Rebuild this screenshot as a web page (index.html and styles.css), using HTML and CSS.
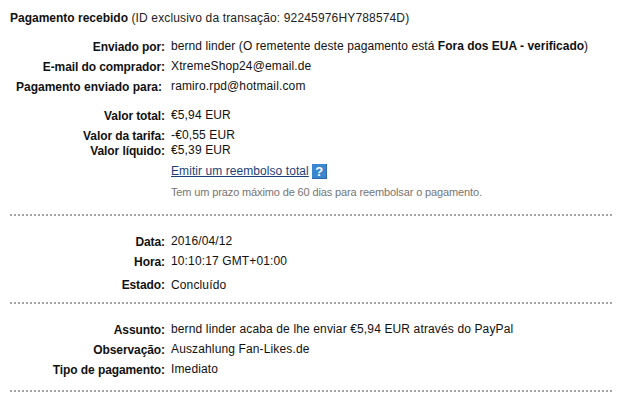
FILE: index.html
```html
<!DOCTYPE html>
<html lang="pt">
<head>
<meta charset="utf-8">
<title>Pagamento recebido</title>
<link rel="stylesheet" href="styles.css">
</head>
<body>
<main class="details">
  <h1 class="title"><span class="title-name">Pagamento recebido</span> <span class="title-id">(ID exclusivo da transação: 92245976HY788574D)</span></h1>
  <dl class="group parties">
    <div class="row"><dt>Enviado por:</dt><dd class="sender">bernd linder (O remetente deste pagamento está <b>Fora dos EUA - verificado</b>)</dd></div>
    <div class="row"><dt>E-mail do comprador:</dt><dd>XtremeShop24@email.de</dd></div>
    <div class="row recipient"><dt>Pagamento enviado para:</dt><dd>ramiro.rpd@hotmail.com</dd></div>
  </dl>
  <dl class="group amounts">
    <div class="row"><dt>Valor total:</dt><dd>€5,94 EUR</dd></div>
    <div class="row"><dt>Valor da tarifa:</dt><dd>-€0,55 EUR</dd></div>
    <div class="row net"><dt>Valor líquido:</dt><dd>€5,39 EUR</dd></div>
  </dl>
  <div class="refund">
    <div class="refund-action"><a class="refund-link" href="#">Emitir um reembolso total</a><span class="help">?</span></div>
    <p class="note">Tem um prazo máximo de 60 dias para reembolsar o pagamento.</p>
  </div>
  <hr class="rule">
  <dl class="group timing">
    <div class="row"><dt>Data:</dt><dd>2016/04/12</dd></div>
    <div class="row"><dt>Hora:</dt><dd>10:10:17 GMT+01:00</dd></div>
    <div class="row status"><dt>Estado:</dt><dd>Concluído</dd></div>
  </dl>
  <hr class="rule">
  <dl class="group subject">
    <div class="row"><dt>Assunto:</dt><dd>bernd linder acaba de lhe enviar €5,94 EUR através do PayPal</dd></div>
    <div class="row"><dt>Observação:</dt><dd>Auszahlung Fan-Likes.de</dd></div>
    <div class="row"><dt>Tipo de pagamento:</dt><dd>Imediato</dd></div>
  </dl>
  <hr class="rule">
</main>
</body>
</html>
```
FILE: styles.css
```css
body {
  margin: 0;
  background: #fff;
  color: #111;
  font: 12px/20px "Liberation Sans", Arial, sans-serif;
}
.details { padding: 8px 16px 0 10px; }
.title { margin: 0 0 8px; font: inherit; }
.title-name { font-weight: bold; }
.title-id { color: #222; letter-spacing: 0.155px; }
.group { margin: 0; }
.row { display: grid; grid-template-columns: 155px 1fr; column-gap: 6px; height: 20px; white-space: nowrap; }
dt { padding-top: 1px; font-weight: bold; text-align: right; letter-spacing: -0.09px; }
dd { margin: 0; letter-spacing: 0.135px; }
.sender { letter-spacing: 0.085px; }
.sender b { letter-spacing: 0; }
.recipient dt { padding-right: 3px; letter-spacing: 0; }
.amounts { margin-top: 9px; }
.net { margin-top: -5px; }
.refund { padding-left: 161px; height: 54px; }
.refund-action { display: flex; align-items: center; height: 22px; }
.refund-link { color: #1c3f78; text-decoration: underline; letter-spacing: 0.07px; }
.help { width: 15px; height: 15px; margin-left: 3px; background: #3a87cf; box-shadow: inset -1px -1px #2d69a8; color: #fff; font: bold 13px/15px "Liberation Sans", sans-serif; text-align: center; }
.note { margin: 0; color: #757575; font-size: 11px; line-height: 20px; letter-spacing: -0.13px; }
.rule { margin: 0; border: 0; height: 2px; background: repeating-linear-gradient(90deg, #a4a4a4 0 2px, transparent 2px 4px); }
.timing { padding: 15px 0 7px; }
.status { margin-top: 4px; }
.status dt { padding-top: 0; }
.subject { padding: 15px 0 11px; }
```
